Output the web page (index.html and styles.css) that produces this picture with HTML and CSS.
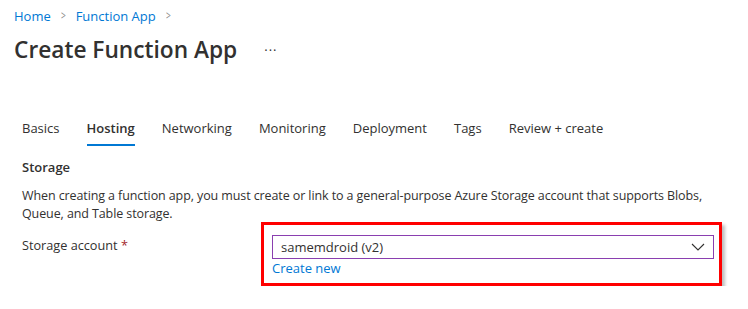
FILE: index.html
```html
<!DOCTYPE html>
<html lang="en">
<head>
    <meta charset="UTF-8">
    <meta name="viewport" content="width=device-width, initial-scale=1.0">
    <title>Create Function App</title>
    <link rel="stylesheet" href="styles.css">
</head>
<body>
    <nav class="breadcrumb">
        <a href="#">Home</a>
        <span class="sep">&gt;</span>
        <a href="#">Function App</a>
        <span class="sep">&gt;</span>
    </nav>
    <header class="page-head">
        <h1>Create Function App</h1>
        <span class="more">&middot;&middot;&middot;</span>
    </header>
    <main>
        <ul class="tabs">
            <li>Basics</li>
            <li class="active">Hosting</li>
            <li>Networking</li>
            <li>Monitoring</li>
            <li>Deployment</li>
            <li>Tags</li>
            <li>Review + create</li>
        </ul>
        <h2>Storage</h2>
        <p class="intro">When creating a function app, you must create or link to a general-purpose Azure Storage account that supports Blobs, Queue, and Table storage.</p>
        <div class="form-row">
            <label>Storage account <span class="req">*</span></label>
            <div class="highlight">
                <div class="select">
                    <span>samemdroid (v2)</span>
                    <svg width="14" height="8" viewBox="0 0 14 8"><path d="M1 1l6 6 6-6" fill="none" stroke="#323130" stroke-width="1.1"/></svg>
                </div>
                <a href="#" class="create-new">Create new</a>
            </div>
        </div>
    </main>
</body>
</html>
```

FILE: styles.css
```css
body {
    font-family: "Open Sans", "Noto Sans", sans-serif;
    font-size: 13px;
    color: #323130;
    background-color: #fff;
    margin: 0;
    padding: 0;
}
a {
    color: #0078d4;
    text-decoration: none;
}
.breadcrumb {
    display: flex;
    align-items: center;
    gap: 9px;
    padding: 7px 14px 0;
    height: 18px;
    line-height: 18px;
}
.breadcrumb .sep {
    color: #8a8886;
    font-size: 12px;
    transform: scaleX(0.7);
}
.page-head {
    display: flex;
    align-items: center;
    padding: 0 14px;
    margin-top: 10px;
    height: 30px;
}
.page-head h1 {
    margin: 0;
    font-size: 22.7px;
    font-weight: 600;
    line-height: 30px;
}
.page-head .more {
    margin-left: 27px;
    font-size: 13px;
    letter-spacing: 1px;
    color: #323130;
}
main {
    padding: 0 22px;
}
.tabs {
    display: flex;
    gap: 27px;
    list-style: none;
    margin: 51px 0 0;
    padding: 0;
}
.tabs li {
    line-height: 20px;
    padding: 2px 0 6px;
    border-bottom: 2px solid transparent;
}
.tabs li.active {
    font-weight: 600;
    border-bottom-color: #0078d4;
}
h2 {
    font-size: 13px;
    font-weight: 600;
    margin: 11px 0 0;
    line-height: 20px;
}
.intro {
    margin: 10px 0 0;
    font-size: 12.5px;
    letter-spacing: -0.1px;
    line-height: 17.5px;
    max-width: 700px;
}
.form-row {
    display: flex;
    align-items: flex-start;
    margin-top: 0;
}
.form-row label {
    width: 239px;
    margin-top: 13px;
    line-height: 20px;
    font-size: 12.7px;
}
.req {
    color: #a4262c;
}
.highlight {
    width: 442px;
    border: 3px solid #ff0000;
    padding: 10px 5px 6px 8px;
    box-shadow: 3px 3px 3px rgba(0, 0, 0, 0.25);
}
.select {
    display: flex;
    align-items: center;
    justify-content: space-between;
    height: 22px;
    border: 1px solid #8a3fb0;
    padding: 0 8px 0 8px;
}
.create-new {
    display: block;
    line-height: 18px;
}
```
